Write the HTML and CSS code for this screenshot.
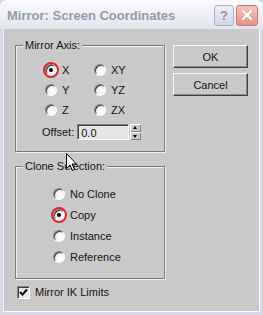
FILE: index.html
```html
<!DOCTYPE html>
<html lang="en">
<head>
    <meta charset="UTF-8">
    <title>Mirror: Screen Coordinates</title>
    <link rel="stylesheet" href="styles.css">
</head>
<body>
    <div class="window">
        <div class="titlebar">
            <span class="title">Mirror: Screen Coordinates</span>
            <div class="caption-buttons">
                <span class="cap-btn help">?</span>
                <span class="cap-btn close">
                    <svg width="12" height="12" viewBox="0 0 12 12"><path d="M2 2 L10 10 M10 2 L2 10" stroke="#fff" stroke-width="2.2" stroke-linecap="round"/></svg>
                </span>
            </div>
        </div>
        <div class="client">
            <div class="top-row">
                <fieldset class="group axis">
                    <legend>Mirror Axis:</legend>
                    <div class="axis-grid">
                        <label class="option"><span class="radio checked marked"></span>X</label>
                        <label class="option"><span class="radio"></span>XY</label>
                        <label class="option"><span class="radio"></span>Y</label>
                        <label class="option"><span class="radio"></span>YZ</label>
                        <label class="option"><span class="radio"></span>Z</label>
                        <label class="option"><span class="radio"></span>ZX</label>
                    </div>
                    <div class="offset-row">
                        <span class="offset-label">Offset:</span>
                        <span class="field">0.0</span>
                        <span class="spinner">
                            <span class="spin up"></span>
                            <span class="spin down"></span>
                        </span>
                    </div>
                </fieldset>
                <div class="buttons">
                    <button class="btn">OK</button>
                    <button class="btn">Cancel</button>
                </div>
            </div>
            <fieldset class="group clone">
                <legend>Clone Selection:</legend>
                <div class="clone-list">
                    <label class="option"><span class="radio"></span>No Clone</label>
                    <label class="option"><span class="radio checked marked"></span>Copy</label>
                    <label class="option"><span class="radio"></span>Instance</label>
                    <label class="option"><span class="radio"></span>Reference</label>
                </div>
            </fieldset>
            <label class="check-row">
                <span class="checkbox">
                    <svg width="9" height="9" viewBox="0 0 9 9"><path d="M1 4 L3.5 6.5 L8 1.5" stroke="#000" stroke-width="2" fill="none"/></svg>
                </span>
                Mirror IK Limits
            </label>
        </div>
        <svg class="cursor" width="12" height="19" viewBox="0 0 12 19">
            <path d="M0.5 0.5 L0.5 15.5 L4 12 L6.5 17.5 L8.5 16.5 L6 11 L10.5 11 Z" fill="#fff" stroke="#000" stroke-width="1"/>
        </svg>
    </div>
</body>
</html>
```

FILE: styles.css
```css
:root {
    --face: #c9c9c9;
    --frame: #d6d8e6;
    --shadow: #7c7c7c;
    --dark: #404040;
    --text: #161616;
}
body {
    margin: 0;
    background-color: var(--frame);
    font-family: "Liberation Sans", Arial, sans-serif;
    font-size: 11px;
    color: var(--text);
}
.window {
    position: relative;
    width: 263px;
    height: 315px;
    box-sizing: border-box;
    padding: 0 3px 3px 3px;
    background-color: var(--frame);
    border-radius: 6px 6px 0 0;
    display: flex;
    flex-direction: column;
    overflow: hidden;
}
.titlebar {
    height: 29px;
    margin: 0 -3px;
    padding: 0 5px 0 7px;
    display: flex;
    align-items: center;
    justify-content: space-between;
    background: linear-gradient(#fbfbfd, #eceef4 60%, #e2e4ec);
    border-radius: 6px 6px 0 0;
    flex: none;
}
.title {
    font-family: "Liberation Sans", Arial, sans-serif;
    font-weight: bold;
    font-size: 13px;
    color: #959ba5;
    margin-top: 2px;
}
.caption-buttons {
    display: flex;
    gap: 2px;
    margin-top: 1px;
}
.cap-btn {
    height: 21px;
    box-sizing: border-box;
    border-radius: 3px;
    display: flex;
    align-items: center;
    justify-content: center;
}
.help {
    width: 20px;
    border: 1px solid #aeb2c4;
    background: linear-gradient(#eef0f6, #d4d7e4);
    color: #8f95aa;
    font-weight: bold;
    font-size: 13px;
}
.close {
    width: 22px;
    border: 1px solid #c97d74;
    background: linear-gradient(#f4c4bb, #e39384);
}
.client {
    flex: 1;
    background-color: var(--face);
    border-left: 1px solid #eeeef4;
    border-right: 1px solid #ffffff;
    border-bottom: 1px solid #ffffff;
    padding: 10px 0 0 11px;
    display: flex;
    flex-direction: column;
}
.top-row {
    display: flex;
    align-items: flex-start;
    gap: 8px;
}
.group {
    margin: 0;
    width: 150px;
    box-sizing: border-box;
    border: 1px solid var(--shadow);
    box-shadow: inset 1px 1px 0 #eeeeee, 1px 1px 0 #eeeeee;
    padding: 0;
}
.group legend {
    margin-left: 7px;
    padding: 0 2px;
    line-height: 13px;
    background-color: var(--face);
}
.axis {
    padding: 8px 0 11px 0;
}
.axis-grid {
    display: grid;
    grid-template-columns: 49px auto;
    grid-auto-rows: 20px;
    padding-left: 29px;
}
.option {
    display: flex;
    align-items: center;
    gap: 5px;
}
.radio {
    position: relative;
    width: 12px;
    height: 12px;
    box-sizing: border-box;
    border-radius: 50%;
    border: 1px solid;
    border-color: #808080 #ffffff #ffffff #808080;
    background: radial-gradient(circle at 65% 65%, #ffffff, #e4e4e4);
    box-shadow: inset 1px 1px 0 var(--dark);
    flex: none;
}
.radio.checked::before {
    content: "";
    position: absolute;
    left: 3px;
    top: 3px;
    width: 4px;
    height: 4px;
    border-radius: 50%;
    background-color: #000;
}
.radio.marked::after {
    content: "";
    position: absolute;
    left: -3px;
    top: -3px;
    width: 16px;
    height: 16px;
    box-sizing: border-box;
    border: 2px solid #e2262a;
    border-radius: 50%;
}
.offset-row {
    display: flex;
    align-items: center;
    margin-top: 4px;
    padding-left: 26px;
    height: 16px;
}
.offset-label {
    margin-right: 3px;
}
.field {
    width: 52px;
    height: 16px;
    box-sizing: border-box;
    border: 1px solid;
    border-color: #808080 #ffffff #ffffff #808080;
    box-shadow: inset 1px 1px 0 var(--dark);
    background-color: #e6e6e6;
    padding: 2px 0 0 3px;
    line-height: 12px;
}
.spinner {
    display: flex;
    flex-direction: column;
    margin-left: 1px;
    height: 16px;
}
.spin {
    position: relative;
    width: 11px;
    height: 8px;
    box-sizing: border-box;
    background-color: var(--face);
    box-shadow: inset 1px 1px 0 #ffffff, inset -1px -1px 0 #808080;
}
.spin::before {
    content: "";
    position: absolute;
    left: 3px;
    border-left: 2.5px solid transparent;
    border-right: 2.5px solid transparent;
}
.up::before {
    top: 2px;
    border-bottom: 3px solid #000;
}
.down::before {
    top: 3px;
    border-top: 3px solid #000;
}
.buttons {
    display: flex;
    flex-direction: column;
    gap: 5px;
    margin-top: 6px;
}
.btn {
    width: 75px;
    height: 23px;
    font-family: inherit;
    font-size: 11px;
    color: var(--text);
    background-color: var(--face);
    border: 1px solid;
    border-color: #f4f4f4 #404040 #404040 #f4f4f4;
    box-shadow: inset -1px -1px 0 #8a8a8a;
    padding: 0;
}
.clone {
    margin-top: 8px;
    padding: 10px 0 11px 0;
}
.clone-list {
    display: flex;
    flex-direction: column;
    padding-left: 37px;
}
.clone-list .option {
    height: 21px;
}
.check-row {
    display: flex;
    align-items: center;
    gap: 5px;
    margin-top: 6px;
    height: 14px;
    padding-left: 2px;
}
.checkbox {
    width: 13px;
    height: 13px;
    box-sizing: border-box;
    border: 1px solid;
    border-color: #808080 #ffffff #ffffff #808080;
    box-shadow: inset 1px 1px 0 var(--dark);
    background-color: #e8e8e8;
    display: flex;
    align-items: center;
    justify-content: center;
}
.cursor {
    position: absolute;
    left: 66px;
    top: 153px;
}
```
